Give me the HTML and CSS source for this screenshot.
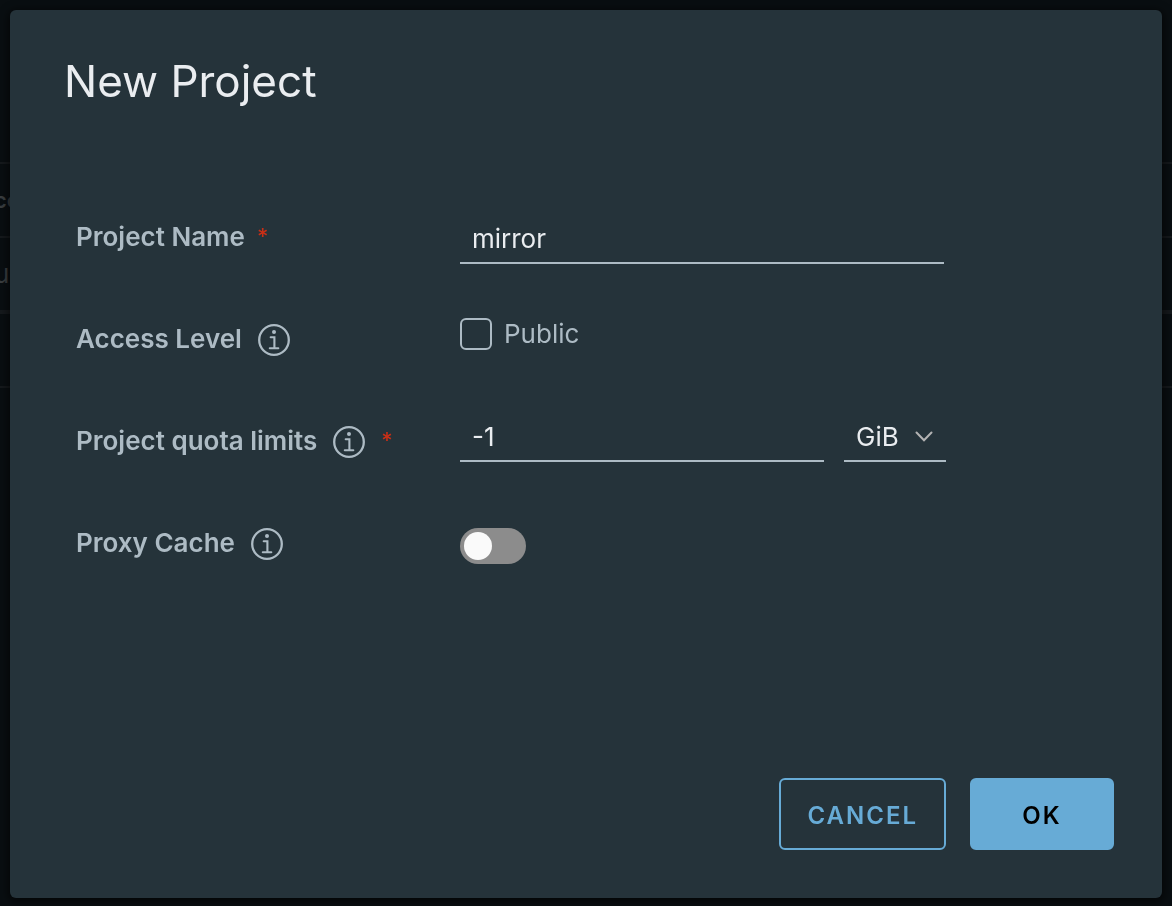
FILE: index.html
```html
<!DOCTYPE html>
<html lang="en">
<head>
    <meta charset="UTF-8">
    <meta name="viewport" content="width=device-width, initial-scale=1.0">
    <title>New Project</title>
    <link rel="stylesheet" href="styles.css">
</head>
<body>
    <svg class="sprite" aria-hidden="true">
        <symbol id="info" viewBox="0 0 32 32">
            <circle cx="16" cy="16" r="14.8" fill="none" stroke="currentColor" stroke-width="2.3"/>
            <circle cx="16" cy="8" r="2" fill="currentColor"/>
            <path d="M12.7 13.2H16.4V24.2M11.8 24.2H20.3" fill="none" stroke="currentColor" stroke-width="2.1" stroke-linecap="round"/>
        </symbol>
    </svg>

    <main class="page">
        <div class="grid-head">cc</div>
        <div class="grid-row">u</div>
        <div class="grid-foot"></div>
    </main>

    <div class="backdrop">
        <form class="modal" role="dialog" aria-labelledby="title">
            <h1 class="modal-title" id="title">New Project</h1>

            <div class="fields">
                <div class="row">
                    <div class="label">
                        <label for="name">Project Name</label>
                        <span class="required">*</span>
                    </div>
                    <input class="text-input" id="name" type="text" value="mirror">
                </div>

                <div class="row">
                    <div class="label">
                        <label for="public">Access Level</label>
                        <svg class="info"><use href="#info"/></svg>
                    </div>
                    <div class="check">
                        <input class="checkbox" id="public" type="checkbox">
                        <label for="public">Public</label>
                    </div>
                </div>

                <div class="row">
                    <div class="label">
                        <label for="quota">Project quota limits</label>
                        <svg class="info"><use href="#info"/></svg>
                        <span class="required">*</span>
                    </div>
                    <div class="quota">
                        <input class="text-input" id="quota" type="text" value="-1">
                        <div class="select-wrap">
                            <select class="unit" aria-label="Unit">
                                <option>GiB</option>
                            </select>
                            <svg class="chevron" viewBox="0 0 18 12"><path d="M1.5 1.5L9 9.3L16.5 1.5" fill="none" stroke="currentColor" stroke-width="2" stroke-linecap="round"/></svg>
                        </div>
                    </div>
                </div>

                <div class="row">
                    <div class="label">
                        <label for="proxy">Proxy Cache</label>
                        <svg class="info"><use href="#info"/></svg>
                    </div>
                    <input class="toggle" id="proxy" type="checkbox" role="switch">
                </div>
            </div>

            <div class="actions">
                <button class="btn btn-outline" type="button">CANCEL</button>
                <button class="btn btn-primary" type="button">OK</button>
            </div>
        </form>
    </div>
</body>
</html>
```

FILE: styles.css
```css
* {
    box-sizing: border-box;
}
body {
    margin: 0;
    background: #090e11;
    font-family: Inter, "Liberation Sans", sans-serif;
    font-size: 26px;
    color: #adbbc4;
}
.sprite {
    display: none;
}

/* datagrid behind the dialog */
.page {
    padding-top: 162px;
    color: #3a3e40;
    line-height: 72px;
}
.grid-head,
.grid-row {
    height: 74px;
    border-top: 2px solid #15191c;
    text-indent: -6px;
}
.grid-head {
    font-size: 22px;
    font-weight: 600;
}
.grid-foot {
    height: 78px;
    border-top: 4px solid #15191c;
    border-bottom: 2px solid #15191c;
}

.backdrop {
    position: fixed;
    inset: 0;
    display: flex;
    padding: 10px 10px 8px;
}
.modal {
    flex: 1;
    display: flex;
    flex-direction: column;
    padding: 44px 48px 48px 54px;
    background: #25333a;
    border-radius: 6px;
    box-shadow: 0 2px 8px 2px rgba(0, 0, 0, 0.6);
}
.modal-title {
    margin: 0;
    font-size: 44px;
    font-weight: 400;
    line-height: 54px;
    color: #eaedf0;
}

.fields {
    flex: 1;
    display: flex;
    flex-direction: column;
    gap: 54px;
    padding: 108px 0 0 12px;
}
.row {
    display: grid;
    grid-template-columns: 384px minmax(0, 484px);
    align-items: start;
    height: 48px;
}
.label {
    display: flex;
    align-items: center;
    height: 40px;
    font-weight: 600;
}
.required {
    margin-left: 12px;
    font-size: 22px;
    font-weight: 500;
    color: #c92f16;
}
.info {
    width: 32px;
    height: 32px;
    margin: 4px 4px 0 16px;
}

.text-input,
.unit {
    width: 100%;
    height: 48px;
    padding: 0 12px 2px;
    border: none;
    border-bottom: 2px solid #adbbc4;
    border-radius: 0;
    outline: none;
    background: transparent;
    font: inherit;
    color: #eaedf0;
}
.check {
    display: flex;
    align-items: center;
    gap: 12px;
    line-height: 32px;
}
.checkbox {
    appearance: none;
    width: 32px;
    height: 32px;
    margin: 0;
    border: 2px solid #adbbc4;
    border-radius: 6px;
}
.checkbox:checked {
    background: #67abd6;
}
.quota {
    display: grid;
    grid-template-columns: 1fr 102px;
    gap: 20px;
    margin-right: -2px;
}
.quota .text-input,
.quota .unit {
    height: 42px;
    padding-bottom: 8px;
}
.select-wrap {
    position: relative;
}
.unit {
    appearance: none;
}
.chevron {
    position: absolute;
    top: 11px;
    right: 13px;
    width: 18px;
    height: 12px;
    color: #b3b3b3;
    pointer-events: none;
}
.toggle {
    appearance: none;
    display: flex;
    width: 66px;
    height: 36px;
    margin: 6px 0 0;
    padding: 4px;
    border-radius: 18px;
    background: #8c8c8c;
}
.toggle::before {
    content: "";
    width: 28px;
    height: 28px;
    border-radius: 50%;
    background: #fafafa;
}
.toggle:checked {
    justify-content: flex-end;
    background: #67abd6;
}

.actions {
    display: flex;
    justify-content: flex-end;
    gap: 24px;
}
.btn {
    min-width: 144px;
    height: 72px;
    padding: 2px 26px 0;
    border: 2px solid #67abd6;
    border-radius: 6px;
    font: inherit;
    font-size: 24px;
    font-weight: 600;
    letter-spacing: 2px;
}
.btn-outline {
    background: transparent;
    color: #67abd6;
}
.btn-primary {
    background: #67abd6;
    color: #000000;
}
```
